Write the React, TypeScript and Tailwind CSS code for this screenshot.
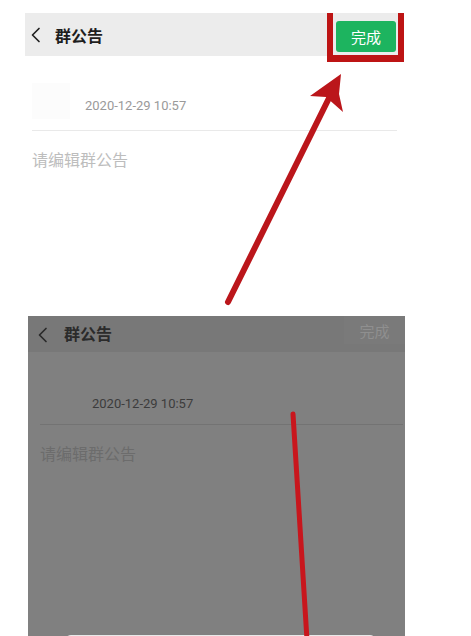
const cjk = { fontFamily: '"Noto Sans CJK SC", "Noto Sans", sans-serif' };
const num = { fontFamily: 'Roboto, "Noto Sans", sans-serif' };

function Chevron({ color }: { color: string }) {
    return (
        <svg width="12" height="16" viewBox="0 0 12 16" fill="none">
            <polyline points="9,1.5 2.5,8 9,14.5" stroke={color} strokeWidth="1.7" strokeLinecap="round" strokeLinejoin="round" />
        </svg>
    );
}

function TopShot() {
    return (
        <div className="relative ml-[25px] w-[379px] h-[303px]">
            <div className="flex items-center h-[43px] bg-[#ececec]">
                <div className="ml-[5px] mt-[1px]">
                    <Chevron color="#222" />
                </div>
                <span className="ml-[13px] text-[16px] font-bold text-[#1e1e1e] leading-none" style={cjk}>
                    群公告
                </span>
                <div className="ml-auto mr-[8px] mt-[4px] flex items-center justify-center w-[60px] h-[31px] rounded-[3px] bg-[#1db45f]">
                    <span className="text-[15px] text-white leading-none" style={cjk}>
                        完成
                    </span>
                </div>
            </div>
            <div className="flex items-end h-[57px] pl-[7px]">
                <div className="w-[38px] h-[36px] bg-[#fcfcfc] mr-[15px] mb-[-6px]"></div>
                <span className="text-[13px] text-[#9a9a9a] leading-none mb-[1px]" style={num}>
                    2020-12-29 10:57
                </span>
            </div>
            <div className="mt-[17px] ml-[7px] w-[365px] h-px bg-[#e9e9e9]"></div>
            <div className="mt-[20px] ml-[7px] text-[16px] text-[#bdbdbd] leading-none" style={cjk}>
                请编辑群公告
            </div>
            <div className="absolute left-[302px] top-0 w-[77px] h-[49px] border-x-[6px] border-b-[7px] border-[#bd1414]"></div>
        </div>
    );
}

function BottomShot() {
    return (
        <div className="relative ml-[28px] w-[377px] h-[320px] bg-[#808080] overflow-hidden">
            <div className="flex items-start h-[36px] bg-[#787878]">
                <div className="ml-[9px] mt-[11px]">
                    <Chevron color="#2a2a2a" />
                </div>
                <span className="ml-[15px] mt-[9px] text-[16px] font-bold text-[#2b2b2b] leading-none" style={cjk}>
                    群公告
                </span>
                <div className="ml-auto flex items-center justify-center w-[61px] h-[28px] bg-[#7a7a7a]">
                    <span className="text-[15px] text-[#8f8f8f] leading-none" style={cjk}>
                        完成
                    </span>
                </div>
            </div>
            <div className="flex items-end h-[57px] pl-[64px]">
                <span className="text-[13px] text-[#3c3c3c] leading-none mb-[-1px]" style={num}>
                    2020-12-29 10:57
                </span>
            </div>
            <div className="mt-[15px] ml-[12px] w-[363px] h-px bg-[#737373]"></div>
            <div className="mt-[20px] ml-[12px] text-[16px] text-[#6c6c6c] leading-none" style={cjk}>
                请编辑群公告
            </div>
            <div className="absolute left-[37px] top-[319px] w-[311px] h-[8px] rounded-t-[6px] bg-[#e9e9e9]"></div>
        </div>
    );
}

export default function App() {
    return (
        <div className="relative w-[471px] h-[636px] bg-white overflow-hidden">
            <div className="pt-[13px]">
                <TopShot />
                <BottomShot />
            </div>
            <svg className="absolute inset-0 pointer-events-none" width="471" height="636" viewBox="0 0 471 636">
                <line x1="228" y1="302" x2="333" y2="90" stroke="#bb161b" strokeWidth="6" strokeLinecap="round" />
                <polygon points="341,74 310,96 326,97 343,112 339,94" fill="#bb161b" />
                <line x1="293" y1="414" x2="307" y2="640" stroke="#c8161d" strokeWidth="5" strokeLinecap="round" />
            </svg>
        </div>
    );
}
